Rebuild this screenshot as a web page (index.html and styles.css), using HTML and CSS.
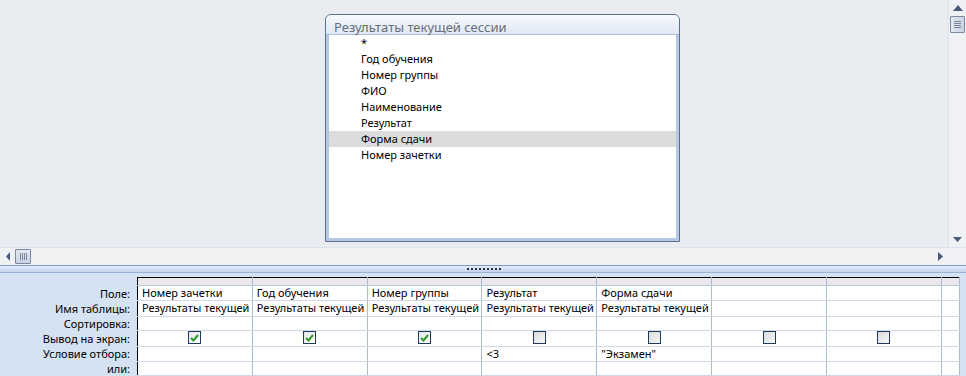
FILE: index.html
```html
<!DOCTYPE html>
<html>
<head>
    <title>Конструктор запросов</title>
    <link rel="stylesheet" href="styles.css">
</head>
<body>
<div class="app">
    <div class="design">
        <div class="canvas">
            <div class="table-box">
                <div class="table-title">Результаты текущей сессии</div>
                <div class="field-list">
                    <div class="field">*</div>
                    <div class="field">Год обучения</div>
                    <div class="field">Номер группы</div>
                    <div class="field">ФИО</div>
                    <div class="field">Наименование</div>
                    <div class="field">Результат</div>
                    <div class="field selected">Форма сдачи</div>
                    <div class="field">Номер зачетки</div>
                </div>
            </div>
        </div>
        <div class="vscroll">
            <div class="arrow-box">
                <svg width="10" height="6" viewBox="0 0 10 6"><polygon points="0,6 10,6 5,0" fill="#4a5a7c"/></svg>
            </div>
            <div class="vthumb"><span></span><span></span><span></span><span></span></div>
            <div class="vtrack"></div>
            <div class="arrow-box">
                <svg width="9" height="5" viewBox="0 0 9 5"><polygon points="0,0 9,0 4.5,5" fill="#4a5a7c"/></svg>
            </div>
        </div>
    </div>

    <div class="hscroll">
        <div class="harrow">
            <svg width="4" height="9" viewBox="0 0 4 9"><polygon points="4,0 4,9 0,4.5" fill="#4a5a7c"/></svg>
        </div>
        <div class="hthumb"><span></span><span></span><span></span><span></span></div>
        <div class="htrack"></div>
        <div class="harrow">
            <svg width="5" height="9" viewBox="0 0 5 9"><polygon points="0,0 0,9 5,4.5" fill="#4a5a7c"/></svg>
        </div>
        <div class="corner"></div>
    </div>

    <div class="splitter"><div class="grip"></div></div>

    <div class="grid-pane">
        <div class="labels">
            <div class="label-head"></div>
            <div class="label">Поле:</div>
            <div class="label">Имя таблицы:</div>
            <div class="label">Сортировка:</div>
            <div class="label">Вывод на экран:</div>
            <div class="label">Условие отбора:</div>
            <div class="label">или:</div>
        </div>
        <table class="qbe">
            <tr class="selector">
                <td></td><td></td><td></td><td></td><td></td><td></td><td></td><td class="last"></td>
            </tr>
            <tr>
                <td>Номер зачетки</td>
                <td>Год обучения</td>
                <td>Номер группы</td>
                <td>Результат</td>
                <td>Форма сдачи</td>
                <td></td><td></td><td class="last"></td>
            </tr>
            <tr>
                <td>Результаты текущей сессии</td>
                <td>Результаты текущей сессии</td>
                <td>Результаты текущей сессии</td>
                <td>Результаты текущей сессии</td>
                <td>Результаты текущей сессии</td>
                <td></td><td></td><td class="last"></td>
            </tr>
            <tr>
                <td></td><td></td><td></td><td></td><td></td><td></td><td></td><td class="last"></td>
            </tr>
            <tr class="show-row">
                <td><span class="check on"><svg width="9" height="8" viewBox="0 0 9 8"><polyline points="1,4 3.5,6.5 8,1" fill="none" stroke="#2c9a2c" stroke-width="2"/></svg></span></td>
                <td><span class="check on"><svg width="9" height="8" viewBox="0 0 9 8"><polyline points="1,4 3.5,6.5 8,1" fill="none" stroke="#2c9a2c" stroke-width="2"/></svg></span></td>
                <td><span class="check on"><svg width="9" height="8" viewBox="0 0 9 8"><polyline points="1,4 3.5,6.5 8,1" fill="none" stroke="#2c9a2c" stroke-width="2"/></svg></span></td>
                <td><span class="check"></span></td>
                <td><span class="check"></span></td>
                <td><span class="check"></span></td>
                <td><span class="check"></span></td>
                <td class="last"></td>
            </tr>
            <tr>
                <td></td><td></td><td></td>
                <td>&lt;3</td>
                <td>"Экзамен"</td>
                <td></td><td></td><td class="last"></td>
            </tr>
            <tr>
                <td></td><td></td><td></td><td></td><td></td><td></td><td></td><td class="last"></td>
            </tr>
        </table>
    </div>
</div>
</body>
</html>
```

FILE: styles.css
```css
body {
    margin: 0;
    font-family: "Noto Sans", "Open Sans", sans-serif;
    font-size: 11px;
    color: #000;
    overflow: hidden;
}

.app {
    width: 966px;
    height: 376px;
    display: flex;
    flex-direction: column;
    overflow: hidden;
}

/* upper pane with the table window */
.design {
    height: 247px;
    display: flex;
}

.canvas {
    flex: 1;
    position: relative;
    background-color: #e9edf2;
}

.table-box {
    position: absolute;
    left: 325px;
    top: 14px;
    width: 353px;
    height: 226px;
    border: 1px solid #5d6f8e;
    border-radius: 6px 6px 0 0;
    background-color: #b4c8e6;
    display: flex;
    flex-direction: column;
}

.table-title {
    height: 20px;
    line-height: 18px;
    padding-top: 3px;
    box-sizing: border-box;
    padding-left: 8px;
    font-size: 13px;
    color: #686d78;
    border-radius: 5px 5px 0 0;
    background: linear-gradient(#f7f9fc, #dfe8f4);
    border-bottom: 1px solid #a9bfdf;
}

.field-list {
    flex: 1;
    margin: 0 3px 3px 3px;
    background-color: #fff;
}

.field {
    height: 16px;
    line-height: 16px;
    padding-left: 32px;
}

.field.selected {
    background-color: #dcdcdc;
}

/* scrollbars */
.vscroll {
    width: 17px;
    border-left: 1px solid #dde3ea;
    background-color: #eff1f4;
    display: flex;
    flex-direction: column;
    align-items: center;
}

.arrow-box {
    height: 16px;
    display: flex;
    align-items: center;
    justify-content: center;
}

.vthumb {
    width: 13px;
    height: 15px;
    border: 1px solid #7b88a6;
    border-radius: 1px;
    background: linear-gradient(to right, #e4e9f1, #c9d2e0);
    display: flex;
    flex-direction: column;
    align-items: center;
    justify-content: center;
    gap: 1px;
}

.vthumb span {
    width: 7px;
    height: 1px;
    background-color: #7a869e;
}

.vtrack {
    flex: 1;
}

.hscroll {
    height: 18px;
    display: flex;
    align-items: center;
    background-color: #f0f1f3;
    border-top: 1px solid #dde3ea;
    box-sizing: border-box;
}

.harrow {
    width: 15px;
    display: flex;
    justify-content: center;
}

.hthumb {
    width: 14px;
    height: 13px;
    border: 1px solid #7b88a6;
    border-radius: 1px;
    background: linear-gradient(#e4e9f1, #c9d2e0);
    display: flex;
    align-items: center;
    justify-content: center;
    gap: 1px;
}

.hthumb span {
    width: 1px;
    height: 7px;
    background-color: #7a869e;
}

.htrack {
    flex: 1;
}

.corner {
    width: 18px;
    height: 100%;
    background-color: #eff1f4;
}

.splitter {
    height: 8px;
    box-sizing: border-box;
    border-top: 1px solid #7c9bcd;
    border-bottom: 1px solid #98b1d8;
    background: linear-gradient(#e4ecf8, #c2d5ef);
    display: flex;
    justify-content: center;
    align-items: center;
}

.grip {
    width: 34px;
    height: 2px;
    margin-left: 2px;
    background: repeating-linear-gradient(to right, #2b2f3a 0, #2b2f3a 2px, transparent 2px, transparent 4px);
}

/* lower pane with the QBE grid */
.grid-pane {
    flex: 1;
    display: flex;
    background-color: #d5e2f2;
    padding-top: 4px;
}

.labels {
    width: 137px;
}

.label-head {
    height: 9px;
}

.label {
    height: 15px;
    line-height: 15px;
    text-align: right;
    padding-right: 7px;
}

.qbe {
    border-collapse: collapse;
    table-layout: fixed;
    width: 823px;
    border-top: 1px solid #000;
    border-left: 1px solid #000;
    background-color: #fff;
}

.qbe td {
    width: 114px;
    height: 14px;
    padding: 0 0 0 4px;
    border-right: 1px solid #a9bdd6;
    border-bottom: 1px solid #cfdae8;
    white-space: nowrap;
    overflow: hidden;
    line-height: 14px;
    box-sizing: border-box;
}

.qbe td.last {
    width: 18px;
}

.qbe tr.selector td {
    height: 8px;
    background-color: #ebe8eb;
    border-bottom: 1px solid #b9c9dd;
}

.qbe tr.show-row td {
    text-align: center;
    padding: 0;
}

.check {
    display: inline-block;
    width: 11px;
    height: 11px;
    border: 1px solid #1d3b5c;
    background: linear-gradient(135deg, #d9d9d9, #f8f8f8);
    vertical-align: middle;
    position: relative;
    top: -1px;
}

.check svg {
    display: block;
    margin: 2px 0 0 1px;
}

.check.on {
    background: linear-gradient(135deg, #e6e6e6, #fff);
}
```
